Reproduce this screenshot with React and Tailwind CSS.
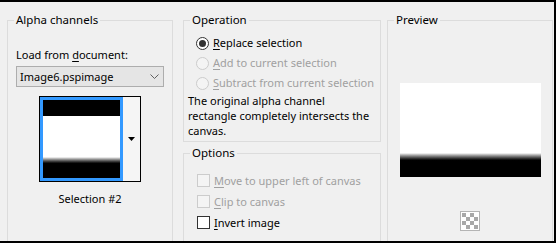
import React from 'react';

const font = "font-['Noto_Sans','Liberation_Sans',sans-serif]";

const Mnemonic = ({ text, idx }) => (
  <>
    {text.slice(0, idx)}
    <span className="underline underline-offset-2">{text[idx]}</span>
    {text.slice(idx + 1)}
  </>
);

const Group = ({ title, className, children }) => (
  <fieldset className={`border border-[#dcdcdc] ${className}`}>
    <legend className="ml-[6px] px-[2px] text-[11.5px] leading-[16px] text-black">{title}</legend>
    {children}
  </fieldset>
);

const Radio = ({ checked, disabled, text, idx }) => (
  <div className="flex h-[20px] items-center whitespace-nowrap">
    <span
      className={`flex h-[13px] w-[13px] shrink-0 items-center justify-center rounded-full border ${
        disabled ? 'border-[#cccccc] bg-[#f4f4f4]' : 'border-[#333333] bg-white'
      }`}
    >
      {checked && <span className="h-[7px] w-[7px] rounded-full bg-[#333333]" />}
    </span>
    <span className={`ml-[4px] ${disabled ? 'text-[#a0a0a0]' : 'text-black'}`}>
      <Mnemonic text={text} idx={idx} />
    </span>
  </div>
);

const Check = ({ disabled, text, idx }) => (
  <div className="flex h-[21px] items-center whitespace-nowrap">
    <span
      className={`h-[13px] w-[13px] shrink-0 border ${
        disabled ? 'border-[#cccccc] bg-[#f4f4f4]' : 'border-[#333333] bg-white'
      }`}
    />
    <span className={`ml-[4px] ${disabled ? 'text-[#a0a0a0]' : 'text-black'}`}>
      <Mnemonic text={text} idx={idx} />
    </span>
  </div>
);

const Checker = () => (
  <svg width="20" height="20" viewBox="0 0 20 20">
    <rect x="0.5" y="0.5" width="19" height="19" fill="#ffffff" stroke="#b4b4b4" />
    {[0, 1, 2, 3].map((r) =>
      [0, 1, 2, 3].map((c) =>
        (r + c) % 2 === 0 ? (
          <rect key={`${r}-${c}`} x={2 + c * 4} y={2 + r * 4} width="4" height="4" fill="#a8a8a8" />
        ) : null
      )
    )}
  </svg>
);

export default function App() {
  return (
    <div
      className={`flex h-[243px] w-[556px] items-start overflow-hidden border-t-2 border-r-2 border-b-2 border-black bg-[#f0f0f0] pt-[10px] pl-[7px] text-[11px] leading-[16px] text-black ${font}`}
    >
      {/* Alpha channels */}
      <Group title="Alpha channels" className="h-[240px] w-[166px] shrink-0">
        <div className="flex flex-col px-[8px] pt-[19px]">
          <div className="h-[16px]">
            Load from <Mnemonic text="document:" idx={0} />
          </div>
          <div className="mt-[3px] flex h-[21px] items-center justify-between border border-[#adadad] bg-[#e5e5e5] pr-[4px] pl-[3px]">
            <span>Image6.pspimage</span>
            <svg width="9" height="6" viewBox="0 0 9 6">
              <path d="M0.5 0.5 L4.5 4.5 L8.5 0.5" fill="none" stroke="#606060" strokeWidth="1" />
            </svg>
          </div>
          <div className="mt-[9px] flex justify-center">
            <div className="flex h-[86px] w-[102px] border border-black bg-[#f5f5f5]">
              <div className="flex w-[83px] flex-col border-[3px] border-[#3399ff]">
                <div className="h-[16px] bg-black" />
                <div className="h-[41px] bg-white" />
                <div className="h-[7px] bg-gradient-to-b from-white to-black" />
                <div className="flex-1 bg-black" />
              </div>
              <div className="flex flex-1 items-center justify-center">
                <svg width="7" height="4" viewBox="0 0 7 4">
                  <path d="M0 0 H7 L3.5 4 Z" fill="#000000" />
                </svg>
              </div>
            </div>
          </div>
          <div className="mt-[9px] text-center">Selection #2</div>
        </div>
      </Group>

      {/* Operation + Options */}
      <div className="ml-[10px] flex w-[198px] shrink-0 flex-col">
        <Group title="Operation" className="h-[130px]">
          <div className="pt-[5px] pl-[12px]">
            <Radio checked text="Replace selection" idx={0} />
            <Radio disabled text="Add to current selection" idx={0} />
            <Radio disabled text="Subtract from current selection" idx={0} />
          </div>
          <p className="pl-[4px] leading-[15px] whitespace-nowrap">
            The original alpha channel
            <br />
            rectangle completely intersects the
            <br />
            canvas.
          </p>
        </Group>
        <Group title="Options" className="mt-[3px] h-[120px]">
          <div className="pt-[9px] pl-[13px]">
            <Check disabled text="Move to upper left of canvas" idx={0} />
            <Check disabled text="Clip to canvas" idx={0} />
            <Check text="Invert image" idx={0} />
          </div>
        </Group>
      </div>

      {/* Preview */}
      <Group title="Preview" className="ml-[6px] h-[240px] w-[166px] shrink-0">
        <div className="flex flex-col items-center pt-[55px]">
          <div className="flex h-[94px] w-[141px] flex-col">
            <div className="h-[70px] bg-white" />
            <div className="h-[8px] bg-gradient-to-b from-white to-black" />
            <div className="flex-1 bg-black" />
          </div>
          <div className="mt-[34px]">
            <Checker />
          </div>
        </div>
      </Group>
    </div>
  );
}
